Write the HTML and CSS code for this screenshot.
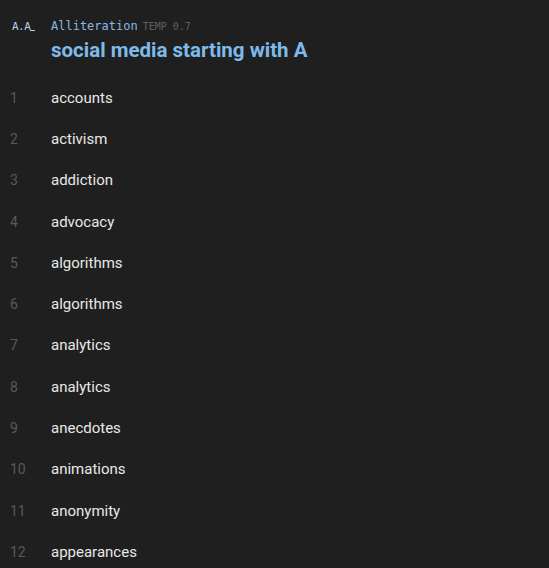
FILE: index.html
```html
<!DOCTYPE html>
<html>
<head>
<meta charset="utf-8">
<link rel="stylesheet" href="styles.css">
</head>
<body>
<div class="page">
  <header class="head">
    <div class="logo">A.A<span class="bar"></span></div>
    <div class="titles">
      <div class="meta"><span class="app">Alliteration</span><span class="temp">TEMP 0.7</span></div>
      <h1 class="title">social media starting with A</h1>
    </div>
  </header>
  <ol class="list">
    <li class="row"><span class="num">1</span><span class="word">accounts</span></li>
    <li class="row"><span class="num">2</span><span class="word">activism</span></li>
    <li class="row"><span class="num">3</span><span class="word">addiction</span></li>
    <li class="row"><span class="num">4</span><span class="word">advocacy</span></li>
    <li class="row"><span class="num">5</span><span class="word">algorithms</span></li>
    <li class="row"><span class="num">6</span><span class="word">algorithms</span></li>
    <li class="row"><span class="num">7</span><span class="word">analytics</span></li>
    <li class="row"><span class="num">8</span><span class="word">analytics</span></li>
    <li class="row"><span class="num">9</span><span class="word">anecdotes</span></li>
    <li class="row"><span class="num">10</span><span class="word">animations</span></li>
    <li class="row"><span class="num">11</span><span class="word">anonymity</span></li>
    <li class="row"><span class="num">12</span><span class="word">appearances</span></li>
  </ol>
</div>
</body>
</html>
```

FILE: styles.css
```css
html, body {
  margin: 0;
  padding: 0;
  background: #1f1f1f;
}
body {
  font-family: Roboto, "Liberation Sans", Arial, sans-serif;
  color: #e6e6e6;
  height: 568px;
  overflow: hidden;
}
.page {
  padding: 18px 0 0 0;
}
.head {
  display: flex;
  align-items: flex-start;
}
.logo {
  width: 51px;
  box-sizing: border-box;
  padding-left: 12px;
  padding-top: 2px;
  font-family: "DejaVu Sans Mono", monospace;
  font-size: 11px;
  color: #b9cfe6;
  letter-spacing: -0.5px;
  display: flex;
  align-items: flex-end;
  line-height: 13px;
}
.logo .bar {
  display: inline-block;
  width: 5px;
  height: 1px;
  background: #b9cfe6;
  margin-bottom: 2px;
}
.titles {
  display: flex;
  flex-direction: column;
}
.meta {
  display: flex;
  align-items: baseline;
  gap: 5px;
  line-height: 15px;
  padding-top: 1px;
}
.app {
  font-family: "DejaVu Sans Mono", monospace;
  font-size: 12px;
  color: #8ab8e6;
}
.temp {
  font-family: "DejaVu Sans Mono", monospace;
  font-size: 10px;
  color: #5f5f5f;
}
.title {
  margin: 4px 0 0 0;
  font-size: 20.5px;
  font-weight: 700;
  color: #7dbbeb;
  line-height: 24px;
}
.list {
  list-style: none;
  margin: 15px 0 0 0;
  padding: 0;
}
.row {
  display: flex;
  align-items: center;
  height: 41.3px;
}
.num {
  width: 51px;
  box-sizing: border-box;
  padding-left: 10px;
  font-size: 14px;
  color: #5a5a5a;
}
.word {
  font-size: 15px;
  color: #e8e8e8;
}
```
